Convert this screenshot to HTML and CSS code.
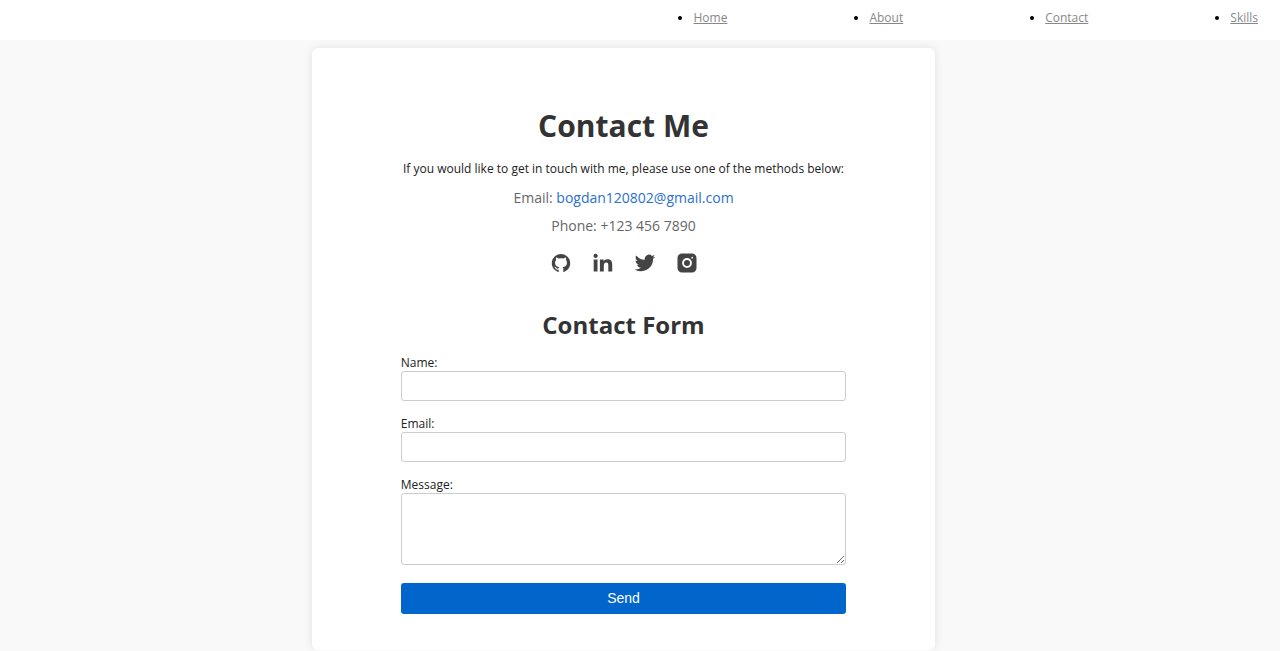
FILE: index.html
```html
<!DOCTYPE html>
<html lang="en">
<head>
<meta charset="utf-8">
<meta name="viewport" content="width=device-width, initial-scale=1">
<title>Contact Me</title>
<link rel="stylesheet" href="styles.css">
</head>
<body>
<header class="site-header">
  <nav aria-label="Main">
    <ul class="nav-list">
      <li><a href="#home">Home</a></li>
      <li><a href="#about">About</a></li>
      <li><a href="#contact">Contact</a></li>
      <li><a href="#skills">Skills</a></li>
    </ul>
  </nav>
</header>
<main class="page">
  <section class="card" id="contact">
    <h1 class="title">Contact Me</h1>
    <p class="intro">If you would like to get in touch with me, please use one of the methods below:</p>
    <p class="detail">Email: <a href="mailto:bogdan120802@gmail.com">bogdan120802@gmail.com</a></p>
    <p class="detail">Phone: +123 456 7890</p>
    <div class="social">
      <a href="#github" aria-label="GitHub"><svg viewBox="0 0 24 24"><path d="M12 3a9.300 9.300 0 0 0-2.940 18.120c.46.08.64-.2.64-.44v-2c-2.340.43-2.950-.57-3.130-1.100a3.380 3.380 0 0 0-.96-1.310c-.32-.18-.79-.61-.01-.62a1.870 1.870 0 0 1 1.430.95 2 2 0 0 0 2.710.77c.04-.5.250-.9.600-1.240-2.070-.23-4.240-1.030-4.240-4.600A3.630 3.630 0 0 1 7.050 9.040a3.350 3.350 0 0 1 .1-2.470s.78-.24 2.550.96a8.770 8.770 0 0 1 4.650 0c1.780-1.200 2.560-.96 2.560-.96a3.350 3.350 0 0 1 .09 2.470 3.600 3.600 0 0 1 .96 2.490c0 3.570-2.170 4.370-4.250 4.600.42.34.64.98.64 1.720v2.800c0 .24.17.53.64.44A9.300 9.300 0 0 0 12 3Z"/></svg></a>
      <a href="#linkedin" aria-label="LinkedIn"><svg viewBox="0 0 24 24"><path d="M4.600 2.800a2.100 2.100 0 1 0 0 4.200 2.100 2.100 0 0 0 0-4.200ZM2.700 8.500h3.800V20.500H2.700ZM8.900 8.500h3.700v1.700c.7-1.200 2-2 3.900-2 3.900 0 4.700 2.500 4.700 5.700v6.600h-3.900v-5.900c0-1.500-.1-3.200-2-3.200s-2.500 1.500-2.500 3.100v6H8.900Z"/></svg></a>
      <a href="#twitter" aria-label="Twitter"><svg viewBox="0 0 24 24"><path d="M22.162 5.656a8.384 8.384 0 0 1-2.402.658A4.196 4.196 0 0 0 21.600 4c-.82.488-1.719.83-2.656 1.015a4.182 4.182 0 0 0-7.126 3.814 11.874 11.874 0 0 1-8.620-4.370 4.168 4.168 0 0 0-.566 2.103c0 1.450.738 2.731 1.860 3.481a4.168 4.168 0 0 1-1.894-.523v.052a4.185 4.185 0 0 0 3.355 4.101 4.210 4.210 0 0 1-1.890.072A4.185 4.185 0 0 0 7.970 16.650a8.394 8.394 0 0 1-6.191 1.732 11.830 11.830 0 0 0 6.410 1.880c7.693 0 11.900-6.373 11.900-11.900 0-.180-.005-.362-.013-.540a8.496 8.496 0 0 0 2.087-2.165Z"/></svg></a>
      <a href="#instagram" aria-label="Instagram"><svg viewBox="0 0 24 24"><path fill-rule="evenodd" d="M7 2.500h10a4.500 4.500 0 0 1 4.500 4.500v10a4.500 4.500 0 0 1-4.500 4.500H7A4.500 4.500 0 0 1 2.500 17V7A4.500 4.500 0 0 1 7 2.500ZM12 7.100a4.900 4.900 0 1 0 0 9.800 4.900 4.900 0 0 0 0-9.800Zm0 1.900a3 3 0 1 1 0 6 3 3 0 0 1 0-6Zm5.200-3.200a.9.900 0 1 0 0 1.800.9.900 0 0 0 0-1.800Z"/></svg></a>
    </div>
    <h2 class="subtitle">Contact Form</h2>
    <form class="form">
      <div class="field"><label for="name">Name:</label><input type="text" id="name" name="name"></div>
      <div class="field"><label for="email">Email:</label><input type="email" id="email" name="email"></div>
      <div class="field"><label for="message">Message:</label><textarea id="message" name="message" rows="4"></textarea></div>
      <button type="submit">Send</button>
    </form>
  </section>
</main>
</body>
</html>
```
FILE: styles.css
```css
* { box-sizing: border-box; }

body {
  margin: 0;
  background: #f9f9f9;
  color: #222;
  font-family: "Open Sans", sans-serif;
  font-size: 12px;
  line-height: 18px;
}

.site-header {
  background: #fff;
  padding: 9px 22px 13px;
}

.nav-list {
  display: flex;
  justify-content: flex-end;
  gap: 142px;
  margin: 0;
  padding: 0;
  color: #000;
}

.nav-list a { color: #888; }

.page { padding: 8px 33px 0 0; }

.card {
  width: 50%;
  margin: 0 auto;
  padding: 56px 89px 36px;
  background: #fff;
  border-radius: 6px;
  box-shadow: 0 0 8px rgba(0, 0, 0, 0.1);
  text-align: center;
}

.title {
  margin: 0 0 12px;
  color: #333;
  font-size: 30px;
  line-height: 44px;
}

.intro {
  margin: 0 -8px 8px;
}

.detail {
  margin: 0 0 4px;
  color: #666;
  font-size: 14px;
  line-height: 24px;
}

.detail a {
  color: #2a6fd0;
  text-decoration: none;
}

.social {
  display: flex;
  justify-content: center;
  gap: 18px;
  margin: 13px 0 32px;
}

.social a {
  display: flex;
  color: #444;
}

.social svg {
  width: 24px;
  height: 24px;
  fill: currentColor;
}

.subtitle {
  margin: 0 0 11px;
  color: #333;
  font-size: 24px;
  line-height: 36px;
}

.form { text-align: left; }

.field { margin-bottom: 14px; }

.field label {
  display: block;
  line-height: 17px;
}

.field input,
.field textarea {
  display: block;
  width: 100%;
  height: 30px;
  padding: 6px;
  border: 1px solid #ccc;
  border-radius: 3px;
  background: #fff;
  font: inherit;
}

.field textarea {
  height: 72px;
  margin-bottom: 18px;
}

.form button {
  display: block;
  width: 100%;
  padding: 6px;
  border: 0;
  border-radius: 3px;
  background: #0066cc;
  color: #fff;
  font-family: "Liberation Sans", Arial, sans-serif;
  font-size: 14px;
  line-height: 19px;
}
```
